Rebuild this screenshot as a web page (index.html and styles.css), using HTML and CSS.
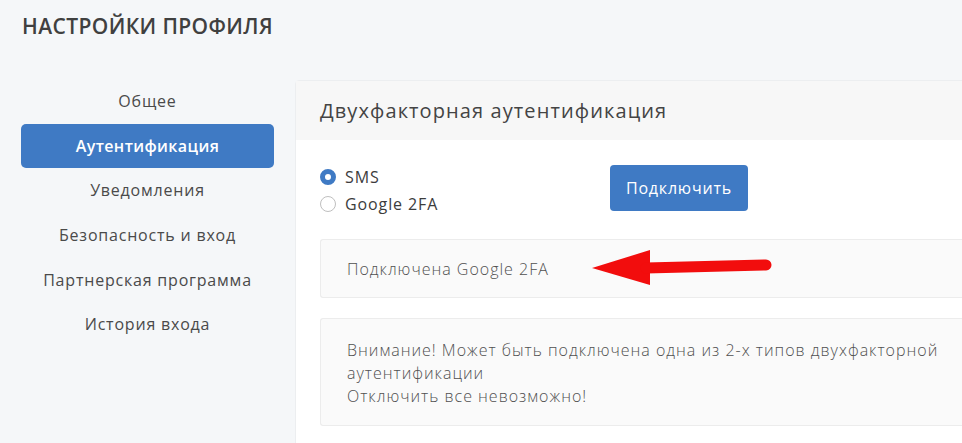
FILE: index.html
```html
<!DOCTYPE html>
<html lang="ru">
<head>
<meta charset="utf-8">
<title>Настройки профиля</title>
<link rel="stylesheet" href="styles.css">
</head>
<body>
<div class="page">
  <h1 class="page-title">НАСТРОЙКИ ПРОФИЛЯ</h1>
  <div class="layout">
    <nav class="sidebar">
      <a class="nav-item">Общее</a>
      <a class="nav-item active">Аутентификация</a>
      <a class="nav-item">Уведомления</a>
      <a class="nav-item">Безопасность и вход</a>
      <a class="nav-item">Партнерская программа</a>
      <a class="nav-item">История входа</a>
    </nav>
    <section class="card">
      <header class="card-header">Двухфакторная аутентификация</header>
      <div class="card-body">
        <div class="options">
          <div class="radios">
            <label class="radio"><span class="dot checked"></span>SMS</label>
            <label class="radio"><span class="dot"></span>Google 2FA</label>
          </div>
          <button class="btn">Подключить</button>
        </div>
        <div class="notice status">
          <span>Подключена Google 2FA</span>
          <svg class="arrow" width="190" height="40" viewBox="0 0 190 40">
            <polygon points="2,21 60,3 60,38" fill="#f20d0d"/>
            <line x1="56" y1="21" x2="176" y2="18" stroke="#f20d0d" stroke-width="11" stroke-linecap="round"/>
          </svg>
        </div>
        <div class="notice warn">
          Внимание! Может быть подключена одна из 2-х типов двухфакторной<br>
          аутентификации<br>
          Отключить все невозможно!
        </div>
      </div>
    </section>
  </div>
</div>
</body>
</html>
```
FILE: styles.css
```css
html, body {
  margin: 0;
  padding: 0;
  background: #f5f7f9;
  overflow: hidden;
  width: 962px;
  height: 443px;
}
.page {
  font-family: "Open Sans", "Liberation Sans", sans-serif;
  color: #454545;
}
.page-title {
  margin: 0;
  padding: 12px 0 0 22px;
  font-size: 21px;
  font-weight: 600;
  letter-spacing: 0.4px;
  color: #404040;
  line-height: 28px;
}
.layout {
  display: flex;
  gap: 21px;
  margin-top: 40px;
  padding-left: 21px;
}
.sidebar {
  width: 253px;
  flex: none;
  display: flex;
  flex-direction: column;
  margin-top: -1px;
}
.nav-item {
  display: flex;
  align-items: center;
  justify-content: center;
  height: 44.6px;
  font-size: 16px;
  color: #4a4a4a;
  letter-spacing: 0.8px;
}
.nav-item.active {
  background: #3f7ac4;
  color: #fff;
  font-weight: 600;
  letter-spacing: 0.4px;
  border-radius: 5px;
}
.card {
  width: 720px;
  flex: none;
  background: #fff;
  border: 1px solid #eceef0;
  border-radius: 4px;
  height: 400px;
}
.card-header {
  background: #f7f7f7;
  height: 59px;
  display: flex;
  align-items: center;
  padding-left: 24px;
  font-size: 20px;
  color: #444;
  letter-spacing: 1.1px;
}
.card-body {
  padding: 25px 0 0 24px;
}
.options {
  display: flex;
  align-items: flex-start;
}
.radios {
  display: flex;
  flex-direction: column;
  width: 290px;
  margin-top: -2px;
}
.radio {
  display: flex;
  align-items: center;
  gap: 9px;
  font-size: 16px;
  color: #3c3c3c;
  height: 27px;
  letter-spacing: 0.9px;
}
.dot {
  width: 14px;
  height: 14px;
  border-radius: 50%;
  border: 1px solid #bfbfbf;
  background: #fff;
  box-sizing: content-box;
}
.dot.checked {
  width: 6px;
  height: 6px;
  border: 5px solid #3f7ac4;
}
.btn {
  width: 138px;
  height: 46px;
  background: #3f7ac4;
  color: #fff;
  border: none;
  border-radius: 4px;
  font-family: inherit;
  font-size: 16px;
  font-weight: 500;
  letter-spacing: 0.8px;
}
.notice {
  background: #fafafa;
  border: 1px solid #ececec;
  border-right: none;
  border-radius: 3px 0 0 3px;
  font-weight: 300;
  font-size: 16px;
  letter-spacing: 1px;
  color: #505050;
  padding-left: 26px;
}
.status {
  margin-top: 22px;
  height: 57px;
  display: flex;
  align-items: center;
  gap: 41px;
}
.arrow {
  flex: none;
  margin-top: -4px;
}
.warn {
  margin-top: 20px;
  height: 108px;
  box-sizing: border-box;
  padding-top: 20px;
  line-height: 23px;
}
```
